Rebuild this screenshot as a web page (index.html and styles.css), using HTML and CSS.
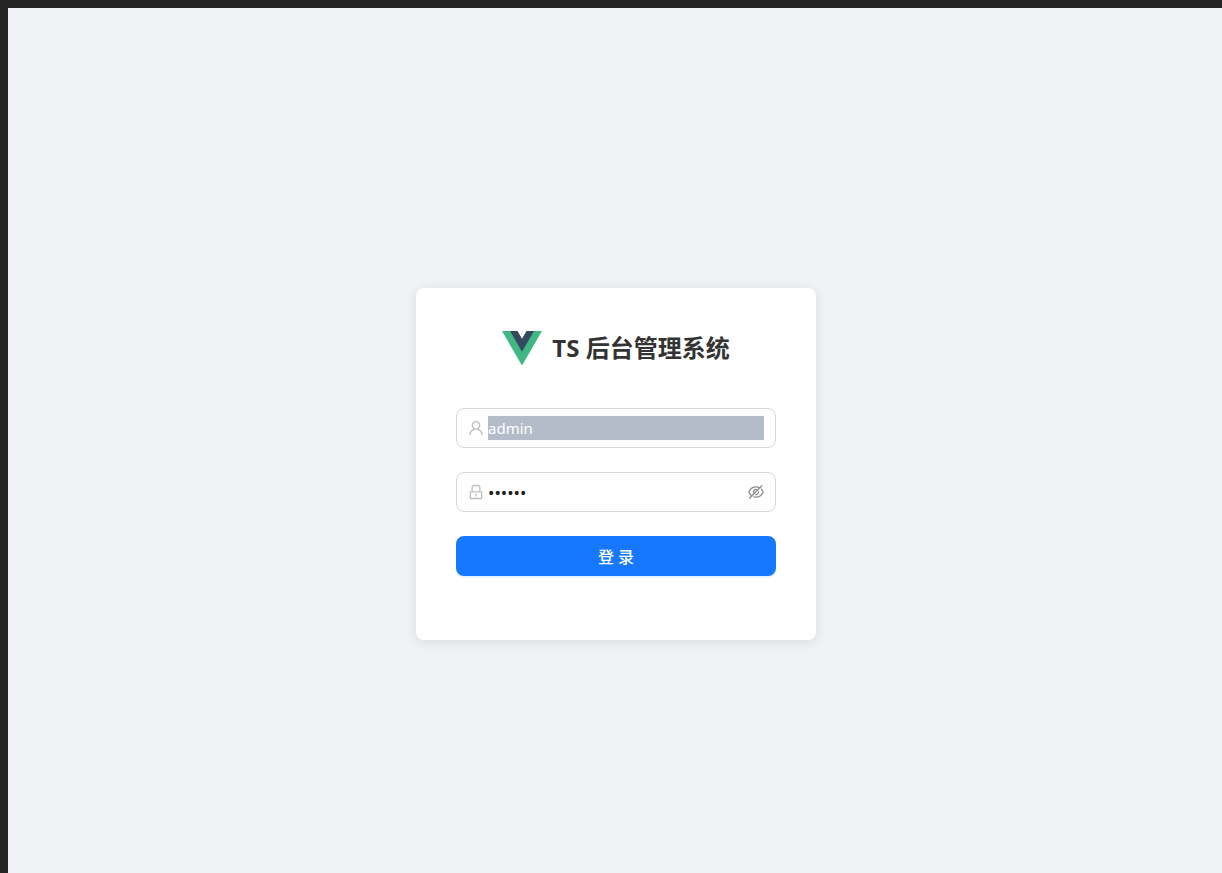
FILE: index.html
```html
<!DOCTYPE html>
<html lang="zh-CN">
<head>
  <meta charset="UTF-8">
  <meta name="viewport" content="width=device-width, initial-scale=1.0">
  <title>TS 后台管理系统</title>
  <link rel="stylesheet" href="styles.css">
</head>
<body>

<main class="login-container">
  <div class="login-box">
    <div class="login-header">
      <svg class="logo" viewBox="0 0 261.76 226.69" aria-hidden="true">
        <path fill="#41b883" d="M161.096.001l-30.225 52.351L100.647.001H-.005l130.877 226.688L261.749.001z"/>
        <path fill="#34495e" d="M161.096.001l-30.225 52.351L100.647.001H52.346l78.526 136.01L209.398.001z"/>
      </svg>
      <h1>TS 后台管理系统</h1>
    </div>

    <form class="login-form">
      <div class="input-wrapper">
        <svg class="icon" viewBox="64 64 896 896" aria-hidden="true">
          <path d="M858.5 763.6a374 374 0 00-80.6-119.5 375.63 375.63 0 00-119.5-80.6c-.4-.2-.8-.3-1.2-.5C719.5 518 760 444.7 760 362c0-137-111-248-248-248S264 225 264 362c0 82.7 40.5 156 102.8 201.1-.4.2-.8.3-1.2.5-44.8 18.9-85 46-119.5 80.6a375.63 375.63 0 00-80.6 119.5A371.7 371.7 0 00136 901.8a8 8 0 008 8.2h60c4.4 0 7.9-3.5 8-7.8 2-77.2 33-149.5 87.8-204.3 56.7-56.7 132-87.9 212.2-87.9s155.5 31.2 212.2 87.9C779 752.7 810 825 812 902.2c.1 4.4 3.6 7.8 8 7.8h60a8 8 0 008-8.2c-1-47.8-10.9-94.3-29.5-138.2zM512 534c-45.9 0-89.1-17.9-121.6-50.4S340 407.9 340 362c0-45.9 17.9-89.1 50.4-121.6S466.1 190 512 190s89.1 17.9 121.6 50.4S684 316.1 684 362c0 45.9-17.9 89.1-50.4 121.6S557.9 534 512 534z"/>
        </svg>
        <input class="input input-filled" type="text" name="username" value="admin" aria-label="用户名">
      </div>

      <div class="input-wrapper">
        <svg class="icon" viewBox="64 64 896 896" aria-hidden="true">
          <path d="M832 464h-68V240c0-70.7-57.3-128-128-128H388c-70.7 0-128 57.3-128 128v224h-68c-17.7 0-32 14.3-32 32v384c0 17.7 14.3 32 32 32h640c17.7 0 32-14.3 32-32V496c0-17.7-14.3-32-32-32zM332 240c0-30.9 25.1-56 56-56h248c30.9 0 56 25.1 56 56v224H332V240zm460 600H232V536h560v304zM484 701v53c0 4.4 3.6 8 8 8h40c4.4 0 8-3.6 8-8v-53a48.01 48.01 0 10-56 0z"/>
        </svg>
        <input class="input input-password" type="password" name="password" id="password" value="123456" aria-label="密码">
        <button class="toggle-btn" type="button" aria-label="显示密码" onclick="togglePassword()">
          <svg class="icon" viewBox="64 64 896 896" aria-hidden="true">
            <path d="M942.2 486.2Q889.47 375.11 816.7 305l-50.88 50.88C807.31 395.53 843.45 447.4 874.7 512 791.5 684.2 673.4 766 512 766q-72.67 0-133.87-22.38L323 798.75Q408 838 512 838q288.3 0 430.2-300.3a60.29 60.29 0 000-51.5zm-63.57-320.64L836 122.88a8 8 0 00-11.32 0L715.31 232.2Q624.86 186 512 186q-288.3 0-430.2 300.3a60.3 60.3 0 000 51.5q56.69 119.4 136.5 191.41L112.48 835a8 8 0 000 11.31L155.17 889a8 8 0 0011.31 0l712.15-712.12a8 8 0 000-11.32zM149.3 512C232.6 339.8 350.7 258 512 258c54.54 0 104.13 9.36 149.12 28.39l-70.3 70.3a176 176 0 00-238.13 238.13l-83.42 83.42C223.1 637.49 183.3 582.28 149.3 512zm246.7 0a112.11 112.11 0 01146.2-106.69L401.31 546.2A112 112 0 01396 512z"/>
            <path d="M508 624c-3.46 0-6.87-.16-10.25-.47l-52.82 52.82a176.09 176.09 0 00227.42-227.42l-52.82 52.82c.31 3.38.47 6.79.47 10.25a111.94 111.94 0 01-112 112z"/>
          </svg>
        </button>
      </div>

      <button class="login-btn" type="submit">登 录</button>
    </form>
  </div>
</main>

<script>
  function togglePassword() {
    const input = document.getElementById("password");
    input.type = input.type === "password" ? "text" : "password";
  }
</script>

</body>
</html>
```

FILE: styles.css
```css
* {
  box-sizing: border-box;
}

body {
  margin: 8px 0 0 8px;
  background: #242424;
  font-family: "Noto Sans", "Noto Sans CJK SC", sans-serif;
}

.login-container {
  display: flex;
  justify-content: center;
  align-items: center;
  min-height: 100vh;
  padding: 39px 0 0 2px;
  background: #f0f2f5;
}

.login-box {
  width: 400px;
  max-width: 100%;
  padding: 40px;
  background: #fff;
  border-radius: 8px;
  box-shadow: 0 2px 12px rgba(0, 0, 0, 0.1);
}

.login-header {
  display: flex;
  justify-content: center;
  align-items: center;
  gap: 10px;
  height: 40px;
  margin-bottom: 40px;
}

.logo {
  width: 40px;
}

h1 {
  margin: 0;
  color: #333;
  font-size: 24px;
  line-height: 40px;
}

.login-form {
  display: flex;
  flex-direction: column;
  gap: 24px;
  margin-bottom: 24px;
}

.input-wrapper {
  display: flex;
  align-items: center;
  gap: 4px;
  padding: 7px 11px;
  border: 1px solid #d9d9d9;
  border-radius: 8px;
}

.icon {
  display: block;
  flex: none;
  width: 16px;
  height: 16px;
  fill: #bfbfbf;
}

.input {
  flex: 1;
  min-width: 0;
  height: 24px;
  padding: 0;
  border: none;
  outline: none;
  background: transparent;
  color: rgba(0, 0, 0, 0.88);
  font-family: inherit;
  font-size: 15px;
}

.input-filled {
  background: #b4bbc9;
  color: #fff;
}

.input-password {
  font-size: 17px;
}

.toggle-btn {
  padding: 0;
  border: none;
  background: none;
  cursor: pointer;
}

.toggle-btn .icon {
  fill: #8c8c8c;
}

.login-btn {
  height: 40px;
  border: none;
  border-radius: 8px;
  background: #1677ff;
  box-shadow: 0 2px 0 rgba(5, 145, 255, 0.1);
  color: #fff;
  font-family: inherit;
  font-size: 16px;
  font-weight: 500;
  cursor: pointer;
}
```
